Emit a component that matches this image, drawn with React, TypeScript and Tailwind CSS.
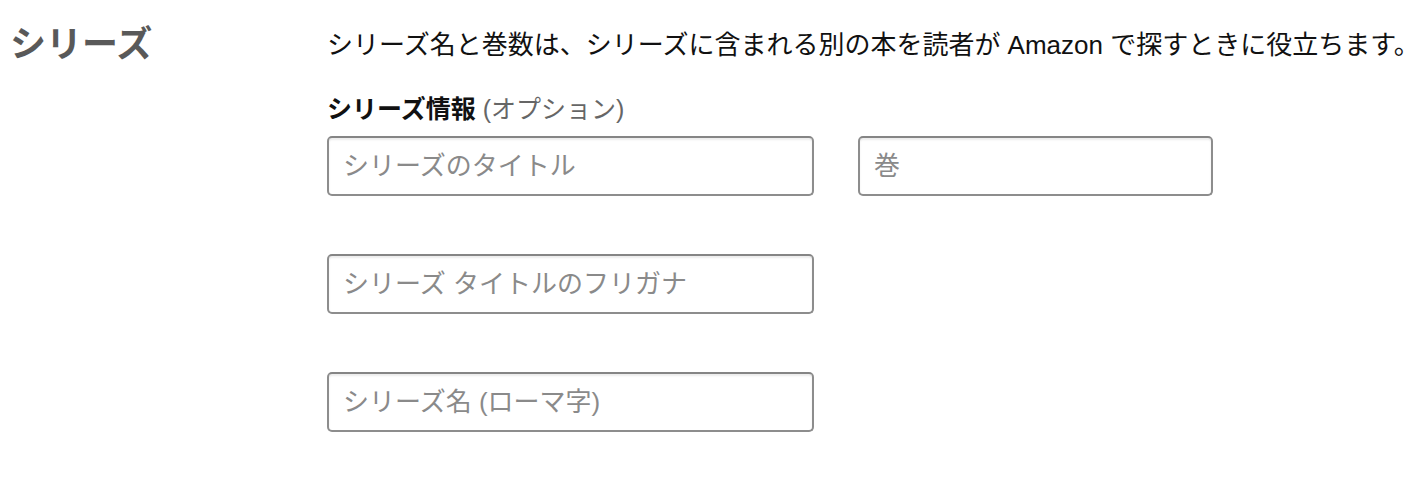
import React from "react";

const font = { fontFamily: '"Liberation Sans", "Noto Sans CJK JP", sans-serif' };

function Field({ placeholder, w }: { placeholder: string; w: string }) {
  return (
    <div
      className={`${w} h-[60px] rounded-[5px] border-2 border-[#8d8d8d] border-t-[#858585] bg-white shadow-[inset_0_2px_2px_rgba(0,0,0,0.08)] flex items-center pl-[14px] text-[26px] text-[#8a8a8a] whitespace-nowrap`}
    >
      {placeholder}
    </div>
  );
}

export default function App() {
  return (
    <div className="w-[1414px] h-[486px] bg-white flex" style={font}>
      <div className="w-[327px] shrink-0 pl-[10px] pt-[20px]">
        <h2 className="text-[36px] leading-[50px] font-bold text-[#595959]">シリーズ</h2>
      </div>
      <div className="flex-1 min-w-0 flex flex-col pt-[27px]">
        <p className="text-[26px] leading-[36px] text-[#111] whitespace-nowrap">
          シリーズ名と巻数は、シリーズに含まれる別の本を読者が Amazon で探すときに役立ちます。
        </p>
        <div className="mt-[28px] text-[25px] leading-[36px] whitespace-nowrap">
          <span className="font-bold text-[#111]">シリーズ情報</span>{" "}
          <span className="text-[#666] text-[25px]">(オプション)</span>
        </div>
        <div className="mt-[9px] flex gap-[44px]">
          <Field placeholder="シリーズのタイトル" w="w-[487px]" />
          <Field placeholder="巻" w="w-[355px]" />
        </div>
        <div className="mt-[58px]">
          <Field placeholder="シリーズ タイトルのフリガナ" w="w-[487px]" />
        </div>
        <div className="mt-[58px]">
          <Field placeholder="シリーズ名 (ローマ字)" w="w-[487px]" />
        </div>
      </div>
    </div>
  );
}
